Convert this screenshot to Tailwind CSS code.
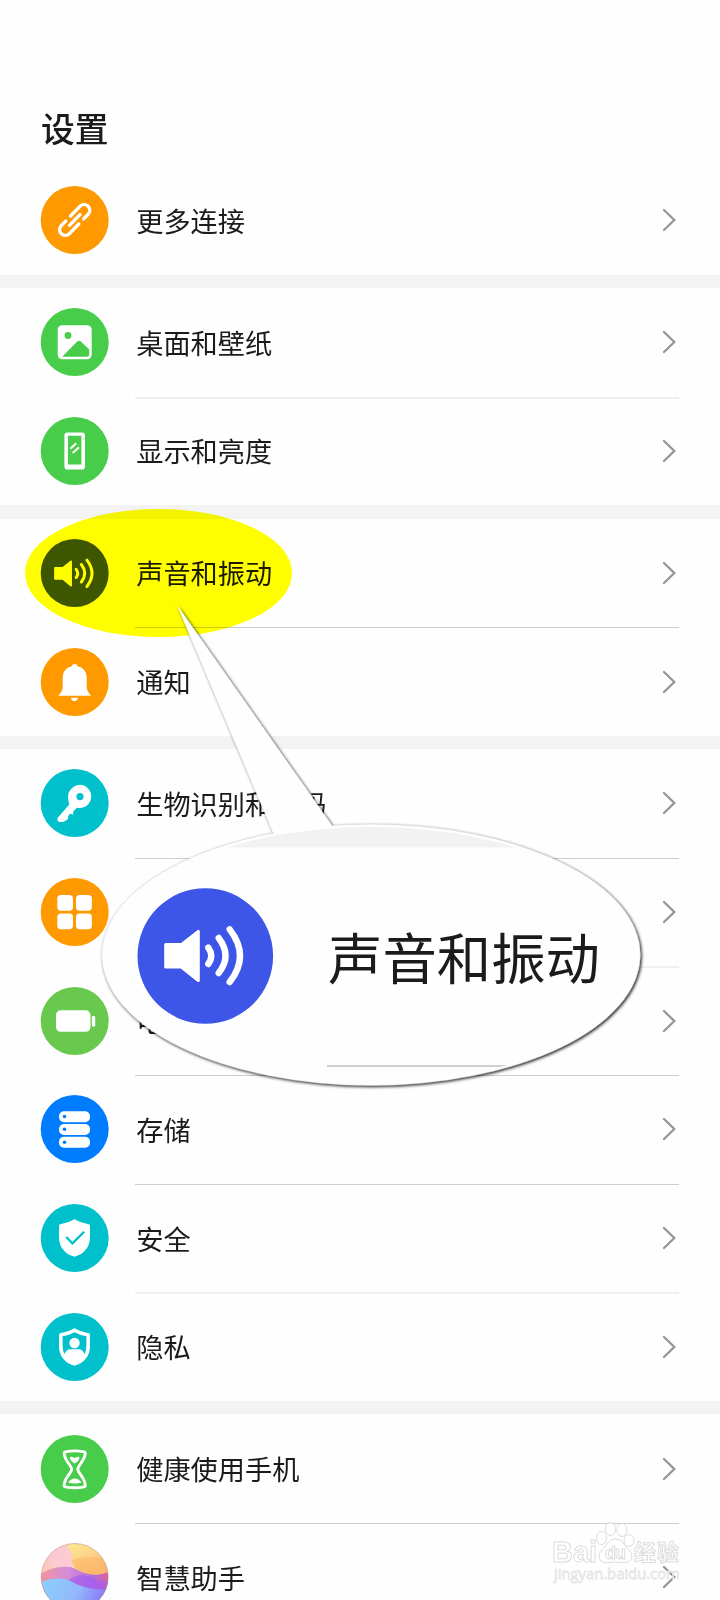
<!DOCTYPE html>
<html lang="zh-CN">
<head>
<meta charset="utf-8">
<title>设置</title>
<script src="https://cdn.jsdelivr.net/npm/@tailwindcss/browser@4"></script>
</head>
<body class="bg-white">
<div class="relative w-[720px] h-[1600px] overflow-hidden bg-[#fefefe] text-[#1b1b1b] font-['Noto_Sans_CJK_SC',sans-serif]">
  <h1 class="h-[165.9px] pt-[106px] pl-[41px] text-[33.8px] leading-[44px] font-medium">设置</h1>
  <main id="list" class="flex flex-col"></main>

  <!-- highlight over the sound row -->
  <div class="absolute left-[25px] top-[509px] w-[266.500px] h-[127.500px] rounded-[50%] bg-[#ffff00] mix-blend-multiply"></div>

  <!-- magnifier callout -->
  <svg class="absolute left-0 top-0" width="720" height="1600" viewBox="0 0 720 1600">
    <defs>
      <filter id="sh" x="-10%" y="-10%" width="120%" height="120%"><feDropShadow dx="1.3" dy="1.3" stdDeviation="1.4" flood-color="#000" flood-opacity=".9"/></filter>
      <clipPath id="in"><ellipse cx="371.5" cy="955" rx="266" ry="128"/></clipPath>
    </defs>
    <g fill="#fefefe" filter="url(#sh)">
      <ellipse cx="371" cy="954.800" rx="269.300" ry="130.700" stroke="#999" stroke-opacity=".4" stroke-width=".5"/>
      <path d="M177 605L273 832.500L300 850L332 825.500Z"/>
    </g>
    <g clip-path="url(#in)">
      <rect x="100" y="820" width="540" height="27.500" fill="#f2f2f3"/>
      <rect x="327" y="1065" width="320" height="2" fill="#cfcfcf"/>
    </g>
    <circle cx="205.300" cy="956" r="67.800" fill="#3e56e8"/>
    <g transform="translate(137.300 887) scale(2)" fill="#fff" stroke="#fff" stroke-linecap="round">
      <path d="M14.200 28.800H22L30.500 22.200V46.800L22 40H14.200Z" stroke-width="1.500" stroke-linejoin="round"/>
      <path d="M35.500 30.300Q38.500 34.500 35.500 38.500M40.700 25.500Q47.500 34.500 40.700 43M46.200 21.200Q56.500 34.500 46.200 47.500" fill="none" stroke-width="3.200"/>
    </g>
  </svg>
  <div class="absolute left-[328px] top-[917px] text-[54.4px] leading-[78px] whitespace-nowrap">声音和振动</div>

  <!-- watermark -->
  <svg class="absolute left-[540px] top-[1515px]" width="150" height="75" viewBox="0 0 150 75" fill="#fff" fill-opacity=".75" stroke="#dcdcdc" stroke-width="1">
    <text x="12" y="47" font-family="Liberation Sans" font-weight="700" font-size="29" textLength="45">Bai</text>
    <ellipse cx="61.500" cy="23" rx="5" ry="6.500"/><ellipse cx="70.500" cy="14" rx="5" ry="6.500"/><ellipse cx="82" cy="15" rx="5" ry="6.500"/><ellipse cx="89" cy="25.500" rx="5" ry="6"/>
    <path d="M75.500 24C83 24 84 31 89 35C95 42 91 48.500 83 47.500Q75.500 46.500 68 47.500C60 48.500 56 42 62 35C67 31 68 24 75.500 24Z"/>
    <text x="65" y="44" font-family="Liberation Sans" font-weight="700" font-size="18" textLength="21">du</text>
    <text x="94" y="45" font-family="Noto Sans CJK SC" font-weight="700" font-size="22" textLength="45">经验</text>
    <text x="14" y="64" font-family="Open Sans" font-size="15" textLength="126" stroke="#e2e2e2" stroke-width=".8" fill-opacity=".5">jingyan.baidu.com</text>
  </svg>
</div>

<script>
const icons = {
  link: ['#ff9900', `<g transform="translate(34 34) rotate(-46)" fill="none" stroke="#fff" stroke-width="3.400" stroke-linecap="round"><path d="M0 -5.700H13.500A5.700 5.700 0 0 1 13.500 5.700H7"/><path d="M0 5.700H-13.500A5.700 5.700 0 0 1 -13.500 -5.700H-7"/><path d="M-7.500 0H7.500"/></g>`],
  image: ['#47cd4a', `<rect x="17" y="17.300" width="34" height="34" rx="4.500" fill="#fff"/><circle cx="27.300" cy="27.500" r="3.400" fill="#47cd4a"/><path d="M21.500 48.700L36.500 33.500Q38.300 31.900 40.200 33.500L48.500 41.500V46Q48.500 48.700 45.700 48.700Z" fill="#47cd4a"/>`],
  phone: ['#47cd4a', `<path fill="#fff" fill-rule="evenodd" d="M26.800 15.500H41.200Q44.300 15.500 44.300 18.600V49.500Q44.300 52.600 41.200 52.600H26.800Q23.700 52.600 23.700 49.500V18.600Q23.700 15.500 26.800 15.500ZM27.300 18.800V47.500H40.700V18.800Z"/><path d="M29.600 31.700L35.600 26.300M32 36L38.300 30.300" stroke="#fff" stroke-width="2"/>`],
  sound: ['#3e56e8', `<g fill="#fff" stroke="#fff" stroke-linecap="round"><path d="M14.200 28.800H22L30.500 22.200V46.800L22 40H14.200Z" stroke-width="1.500" stroke-linejoin="round"/><path d="M35.500 30.300Q38.500 34.500 35.500 38.500M40.700 25.500Q47.500 34.500 40.700 43M46.200 21.200Q56.500 34.500 46.200 47.500" fill="none" stroke-width="3"/></g>`],
  bell: ['#ff9900', `<path fill="#fff" d="M34 16Q36.300 16 37 18.200C43 19.500 46 24 46 30V39Q46 43 50.300 47.700H17.700Q22 43 22 39V30C22 24 25 19.500 31 18.200Q31.700 16 34 16ZM30.300 49.800H37.200Q36.800 53 33.700 53Q30.700 53 30.300 49.800Z"/>`],
  key: ['#00c0cb', `<path fill="#fff" fill-rule="evenodd" d="M39 15.800A11.600 11.600 0 1 1 36.300 38.700L32.500 42.500L32.500 45.500L29.500 44.800L27.500 47L27.300 50L22.800 53L17.500 52.700Q16.500 52 16.800 49L28.600 35.500Q26.500 28 28 23.500Q31.500 16.500 39 15.800ZM39.300 24A3.600 3.600 0 1 0 39.300 31.200A3.600 3.600 0 1 0 39.300 24Z"/>`],
  apps: ['#ff9900', `<g fill="#fff"><rect x="16.600" y="17" width="15.700" height="15.700" rx="3.700"/><rect x="35.300" y="17" width="15.900" height="15.700" rx="3.700"/><rect x="16.600" y="35.600" width="15.700" height="15.700" rx="3.700"/><rect x="35.300" y="35.600" width="15.900" height="15.700" rx="3.700"/></g>`],
  battery: ['#69c94f', `<g fill="#fff"><rect x="15.300" y="23.300" width="34.500" height="21.500" rx="4.800"/><rect x="51.200" y="29" width="3.300" height="10.500" rx="1.200"/></g>`],
  storage: ['#007dff', `<g fill="#fff"><rect x="18.300" y="16.300" width="31" height="11" rx="5"/><rect x="18.300" y="29" width="31" height="11" rx="5"/><rect x="18.300" y="41.800" width="31" height="11" rx="5"/></g><g fill="#007dff"><circle cx="23.800" cy="21.500" r="1.800"/><circle cx="23.800" cy="34.300" r="1.800"/><circle cx="23.800" cy="47.200" r="1.800"/></g>`],
  shield: ['#00c0cb', `<path fill="#fff" d="M33.800 15.200Q40 19 48 20.300Q49.300 20.500 49.300 22V33C49.300 43 43.500 50 33.800 52.800C24 50 18.300 43 18.300 33V22Q18.300 20.500 19.600 20.300Q27.500 19 33.800 15.200Z"/><path d="M25.500 33L31.700 39.400L43.500 27.700" fill="none" stroke="#00c0cb" stroke-width="2.300"/>`],
  privacy: ['#00c0cb', `<path fill="#fff" d="M33.800 15.200Q40 19 48 20.300Q49.300 20.500 49.300 22V33C49.300 43 43.500 50 33.800 52.800C24 50 18.300 43 18.300 33V22Q18.300 20.500 19.600 20.300Q27.500 19 33.800 15.200Z"/><path fill="#00c0cb" d="M33.800 19.200Q39 22 45.700 23.300V33Q45.600 37.500 44 41.200Q42 36.300 37.800 36.300H29.800Q25.600 36.300 23.600 41.200Q22 37.500 21.900 33V23.300Q28.600 22 33.800 19.200Z"/><circle cx="33.800" cy="30" r="5.200" fill="#fff"/>`],
  hourglass: ['#47cd4a', `<path d="M24.500 16.800Q34 15 43.500 16.800Q45 17.200 44.300 20C43.300 26 37 31 37 34.300C37 37.500 43.300 42 44.300 48.500Q45 51.500 43.500 51.800Q34 53.600 24.500 51.800Q23 51.500 23.700 48.500C24.700 42 31 37.500 31 34.300C31 31 24.700 26 23.700 20Q23 17.200 24.500 16.800Z" fill="none" stroke="#fff" stroke-width="2.900"/><path fill="#fff" d="M34 23Q38 20.700 38.800 22.400Q39.200 25 34 28.500Q28.800 25 29.200 22.400Q30 20.700 34 23ZM27.300 47.500Q34 39.500 41 47.500Q34 49.500 27.300 47.500Z"/>`],
  ai: ['#ffffff', `<defs><linearGradient id="a" x1="0" y1="0" x2=".6" y2=".2"><stop offset="0" stop-color="#fbc3b4"/><stop offset="1" stop-color="#fbd3cb"/></linearGradient><linearGradient id="b" x1="0" y1="0" x2="1" y2="0"><stop offset="0" stop-color="#f0939f"/><stop offset=".4" stop-color="#d68cd6"/><stop offset=".75" stop-color="#b06be6"/><stop offset="1" stop-color="#d8629b"/></linearGradient><linearGradient id="c" x1="0" y1="0" x2="1" y2=".2"><stop offset="0" stop-color="#8bd0fb"/><stop offset=".6" stop-color="#93b8fc"/><stop offset="1" stop-color="#8a78f4"/></linearGradient><linearGradient id="y" x1="0" y1="0" x2=".5" y2="1"><stop offset="0" stop-color="#fde98e"/><stop offset=".5" stop-color="#fdd58a"/><stop offset="1" stop-color="#fbb877"/></linearGradient><clipPath id="o"><circle cx="34" cy="34" r="33.500"/></clipPath></defs><g clip-path="url(#o)"><rect width="68" height="68" fill="url(#a)"/><ellipse cx="20" cy="16" rx="12" ry="11" fill="#fcc9d6" opacity=".8"/><path d="M0 31Q14 22 30 24Q44 31 68 28V50H0Z" fill="url(#b)"/><path d="M26 0H68V29Q55 34 44 30Q30 26 31 16Q33 12 26 0Z" fill="url(#y)"/><path d="M31 17Q45 12 68 15V29Q55 34 44 30Q33 26 31 17Z" fill="#fbb765" opacity=".55"/><path d="M28 37Q40 28 54 36Q62 40 68 37V52H30Z" fill="#a45cf0" opacity=".7"/><path d="M0 39Q15 33 28 37Q45 48 68 46V68H0Z" fill="url(#c)"/></g><circle cx="34" cy="34" r="33.500" fill="none" stroke="#b98a8a" stroke-opacity=".5"/>`]
};
const groups = [
  [['link', '更多连接']],
  [['image', '桌面和壁纸'], ['phone', '显示和亮度']],
  [['sound', '声音和振动'], ['bell', '通知']],
  [['key', '生物识别和密码'], ['apps', '应用'], ['battery', '电池'], ['storage', '存储'], ['shield', '安全'], ['privacy', '隐私']],
  [['hourglass', '健康使用手机'], ['ai', '智慧助手']]
];
/* rows whose top divider falls between two device pixels and is drawn wide and pale */
const pale = ['phone', 'battery', 'privacy'];
document.getElementById('list').innerHTML = groups.map((g, gi) => `
  ${gi ? '<div class="h-[13.33px] bg-[#f3f3f3]"></div>' : ''}
  <section>${g.map(([k, t], i) => `
    <div class="h-[108.667px] pl-[41px] flex items-center">
      <svg class="shrink-0 overflow-visible" width="68" height="68" viewBox="0.3 0 68 68"><circle cx="34" cy="34" r="34" fill="${icons[k][0]}"/>${icons[k][1]}</svg>
      <div class="ml-[26.4px] mr-[41px] flex-1 h-full flex flex-col">
        <div class="${i === 0 ? 'h-0' : pale.includes(k) ? 'h-[2px] -mb-[2px] bg-[#f0f0f0]' : 'h-px -mb-px bg-[#cdcdcd]'}"></div>
        <div class="flex-1 flex items-center justify-between">
          <span class="text-[27.2px] leading-[40px] pl-[0.8px] -mt-px">${t}</span>
          <svg class="mr-[2.5px]" width="16" height="24" viewBox="0 0 16 24"><path d="M3 2L13.300 12L3 22" fill="none" stroke="#969696" stroke-width="2.300" stroke-linecap="round"/></svg>
        </div>
      </div>
    </div>`).join('')}
  </section>`).join('');
</script>
</body>
</html>
